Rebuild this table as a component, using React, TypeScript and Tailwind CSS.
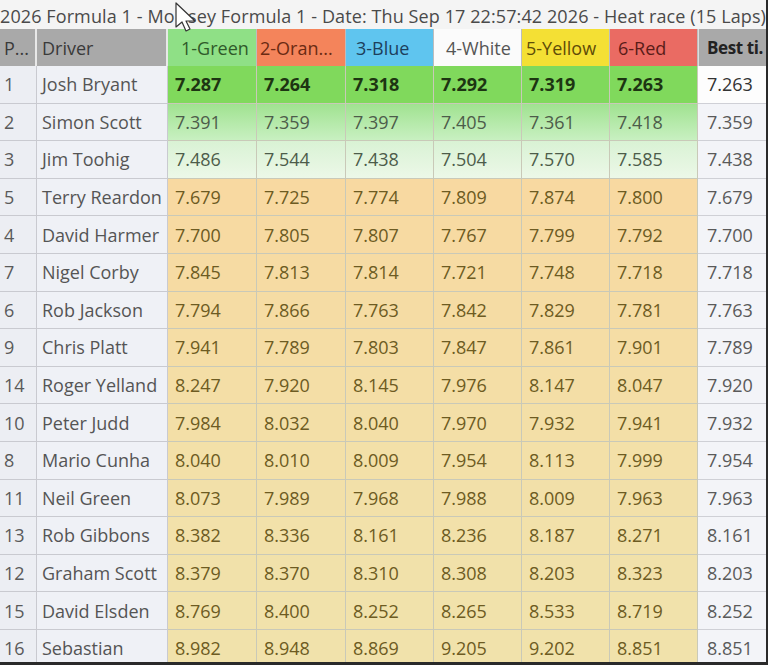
import React from "react";

type Row = [string, string, string[], string];

const rows: Row[] = [
  ["1", "Josh Bryant", ["7.287", "7.264", "7.318", "7.292", "7.319", "7.263"], "7.263"],
  ["2", "Simon Scott", ["7.391", "7.359", "7.397", "7.405", "7.361", "7.418"], "7.359"],
  ["3", "Jim Toohig", ["7.486", "7.544", "7.438", "7.504", "7.570", "7.585"], "7.438"],
  ["5", "Terry Reardon", ["7.679", "7.725", "7.774", "7.809", "7.874", "7.800"], "7.679"],
  ["4", "David Harmer", ["7.700", "7.805", "7.807", "7.767", "7.799", "7.792"], "7.700"],
  ["7", "Nigel Corby", ["7.845", "7.813", "7.814", "7.721", "7.748", "7.718"], "7.718"],
  ["6", "Rob Jackson", ["7.794", "7.866", "7.763", "7.842", "7.829", "7.781"], "7.763"],
  ["9", "Chris Platt", ["7.941", "7.789", "7.803", "7.847", "7.861", "7.901"], "7.789"],
  ["14", "Roger Yelland", ["8.247", "7.920", "8.145", "7.976", "8.147", "8.047"], "7.920"],
  ["10", "Peter Judd", ["7.984", "8.032", "8.040", "7.970", "7.932", "7.941"], "7.932"],
  ["8", "Mario Cunha", ["8.040", "8.010", "8.009", "7.954", "8.113", "7.999"], "7.954"],
  ["11", "Neil Green", ["8.073", "7.989", "7.968", "7.988", "8.009", "7.963"], "7.963"],
  ["13", "Rob Gibbons", ["8.382", "8.336", "8.161", "8.236", "8.187", "8.271"], "8.161"],
  ["12", "Graham Scott", ["8.379", "8.370", "8.310", "8.308", "8.203", "8.323"], "8.203"],
  ["15", "David Elsden", ["8.769", "8.400", "8.252", "8.265", "8.533", "8.719"], "8.252"],
  ["16", "Sebastian", ["8.982", "8.948", "8.869", "9.205", "9.202", "8.851"], "8.851"],
];

const lapBg = [
  "bg-[#80d95c]",
  "bg-gradient-to-b from-[#a0e290] to-[#c8f0c1]",
  "bg-gradient-to-b from-[#d9f2d4] to-[#ecf8e8]",
  "bg-[#f8d9a1]",
  "bg-[#f7daa2]",
  "bg-[#f6dba3]",
  "bg-[#f5dca4]",
  "bg-[#f5dda5]",
  "bg-[#f4dea6]",
  "bg-[#f3dfa7]",
  "bg-[#f3e0a8]",
  "bg-[#f2e0a9]",
  "bg-[#f2e1aa]",
  "bg-[#f1e1aa]",
  "bg-[#f1e2ab]",
  "bg-[#f1e2ab]",
];

const lapText = (i: number) =>
  i === 0
    ? "font-bold text-[#1d3512]"
    : i < 3
    ? "text-[#4d5c4a]"
    : "text-[#6d5b22]";

const headers = [
  { label: "1-Green", cls: "bg-[#8fe086] text-[#2f5a2a] pl-[13px]" },
  { label: "2-Oran...", cls: "bg-[#f4845b] text-[#6a2a12] pl-[3px]" },
  { label: "3-Blue", cls: "bg-[#5fc5ef] text-[#1d3f5c] pl-[10px]" },
  { label: "4-White", cls: "bg-[#fbfbfb] text-[#555] pl-[12px]" },
  { label: "5-Yellow", cls: "bg-[#f4e034] text-[#5e4c08] pl-[4px]" },
  { label: "6-Red", cls: "bg-[#ea6b63] text-[#5a1c18] pl-[8px]" },
];

const cols =
  "grid grid-cols-[37px_131px_89px_89px_88px_88px_88px_88px_68px]";

function Cursor() {
  return (
    <svg
      className="absolute left-[174px] top-[2px]"
      width="24"
      height="30"
      viewBox="0 0 24 30"
    >
      <path
        d="M2 1 L2 25 L8 20 L12 29 L16 27 L12 19 L21 19 Z"
        fill="#ffffff"
        stroke="#333"
        strokeWidth="1.2"
        strokeLinejoin="round"
      />
    </svg>
  );
}

export default function App() {
  return (
    <div
      className="relative w-[768px] h-[665px] overflow-hidden bg-[#f3f3f3] border-r-2 border-b-[3px] border-[#2a2a2a] text-[18px] leading-none"
      style={{ fontFamily: '"Open Sans", "Noto Sans", sans-serif' }}
    >
      <div className="h-[29px] flex items-center whitespace-nowrap text-[#4a4a4a] bg-[#f4f4f4] tracking-[0.1px] pt-[2px]">
        2026 Formula 1 - Mo<span className="inline-block w-[15px]" />sey Formula 1 - Date: Thu Sep 17 22:57:42 2026 - Heat race (15 Laps)
      </div>
      <Cursor />
      <div className={`${cols} h-[37px]`}>
        <div className="bg-[#a9a9a9] text-[#3a3a3a] flex items-center pl-[4px] border-r-2 border-[#e8e8e8] overflow-hidden whitespace-nowrap">
          P...
        </div>
        <div className="bg-[#a9a9a9] text-[#3a3a3a] flex items-center pl-[5px] border-r-2 border-[#e8e8e8]">
          Driver
        </div>
        {headers.map((h) => (
          <div
            key={h.label}
            className={`${h.cls} flex items-center whitespace-nowrap overflow-hidden border-r border-[#bdbdbd]`}
          >
            {h.label}
          </div>
        ))}
        <div className="bg-[#a9a9a9] text-[#222] font-bold text-[17px] tracking-[-0.4px] flex items-center pl-[8px] whitespace-nowrap overflow-hidden border-l border-[#ddd]">
          Best ti.
        </div>
      </div>
      {rows.map((r, i) => (
        <div key={i} className={`${cols} h-[37.6px]`}>
          <div className="bg-[#eceef3] text-[#5a5a5a] flex items-center pl-[4px] border-r border-b border-[#c9cad0]">
            {r[0]}
          </div>
          <div className="bg-[#eff1f6] text-[#555] flex items-center pl-[5px] border-r border-b border-[#c9cad0] whitespace-nowrap">
            {r[1]}
          </div>
          {r[2].map((v, j) => (
            <div
              key={j}
              className={`${lapBg[i]} ${lapText(i)} flex items-center pl-[7px] border-r border-b border-[#c9c9b8]`}
            >
              {v}
            </div>
          ))}
          <div
            className={`${i === 0 ? "bg-[#fdfdfd] text-[#333]" : "bg-[#f3f4f8] text-[#5a5a5a]"} flex items-center pl-[9px] border-b border-[#cfd0d6]`}
          >
            {r[3]}
          </div>
        </div>
      ))}
    </div>
  );
}
